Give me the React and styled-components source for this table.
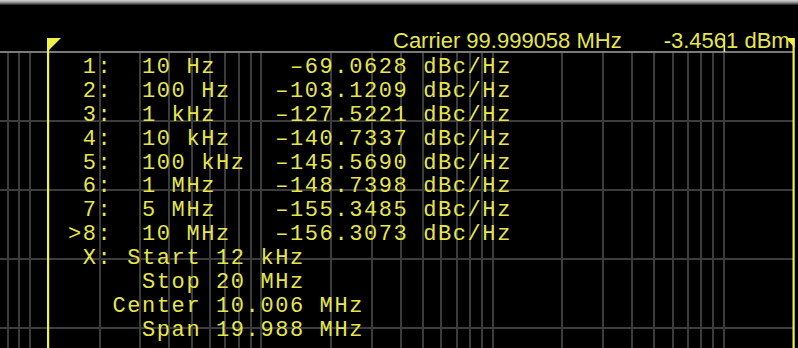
import React from 'react';
import styled, { createGlobalStyle } from 'styled-components';

const YELLOW = '#e6e64a';
const LINE_YELLOW = '#f0f048';
const GRID = '#3c3c3c';
const BORDER = '#7a7a7a';
const CW = 14.8;

const GlobalStyle = createGlobalStyle`
  html, body { margin: 0; padding: 0; background: #000; }
  #root { width: 798px; height: 348px; }
`;

const Screen = styled.div`
  width: 798px;
  height: 348px;
  background: #000;
  overflow: hidden;
  display: flex;
  flex-direction: column;
`;

const TopBezel = styled.div`
  flex: none;
  height: 5px;
  background: linear-gradient(#d2d2d2 0%, #a4a4a4 40%, #4c4c4c 80%, #151515 100%);
`;

const Display = styled.div`
  position: relative;
  flex: 1;
  min-height: 0;
`;

const Graticule = styled.svg`
  position: absolute;
  left: 0;
  top: 0;
  width: 100%;
  height: 100%;
  display: block;
`;

const Header = styled.div`
  position: relative;
  height: 47px;
  display: flex;
  align-items: flex-end;
  gap: 42px;
  padding-left: 393px;
  font-family: "Liberation Sans", Arial, sans-serif;
  font-size: 22px;
  line-height: 22px;
  color: ${YELLOW};
  white-space: pre;
`;

const Readout = styled.div`
  position: relative;
  margin-top: 4px;
  padding-left: 68px;
  font-family: "Liberation Mono", "DejaVu Sans Mono", monospace;
  font-size: 22px;
  letter-spacing: 1.6px;
  line-height: 23.9px;
  color: ${YELLOW};
  white-space: pre;
`;

const Row = styled.div`
  display: flex;
  height: 23.9px;
`;

const Field = styled.span`
  flex: none;
  width: ${(p) => p.$cells * CW}px;
  margin-left: ${(p) => (p.$skip || 0) * CW}px;
  text-align: ${(p) => p.$align || 'left'};
`;

const markers = [
  ['1:', '10 Hz', '–69.0628'],
  ['2:', '100 Hz', '–103.1209'],
  ['3:', '1 kHz', '–127.5221'],
  ['4:', '10 kHz', '–140.7337'],
  ['5:', '100 kHz', '–145.5690'],
  ['6:', '1 MHz', '–148.7398'],
  ['7:', '5 MHz', '–155.3485'],
  ['>8:', '10 MHz', '–156.3073'],
];

const xAxis = [
  ['X:', 'Start', '12 kHz'],
  ['', 'Stop', '20 MHz'],
  ['', 'Center', '10.006 MHz'],
  ['', 'Span', '19.988 MHz'],
];

const freqs = [];
[8e3, 9e3].forEach((f) => freqs.push(f));
[1e4, 1e5, 1e6].forEach((d) => {
  for (let m = 1; m <= 9; m++) freqs.push(d * m);
});
freqs.push(1e7);

const xOf = (f) => Math.round(30 + 231.3 * Math.log10(f / 1e4));
const hLines = [121, 190, 259, 328];

function Grid() {
  return (
    <Graticule viewBox="0 5 798 343" preserveAspectRatio="none">
      {freqs.map((f) => (
        <line key={f} x1={xOf(f)} x2={xOf(f)} y1={52} y2={348} stroke={GRID} strokeWidth={2} />
      ))}
      {hLines.map((y) => (
        <line key={y} x1={0} x2={793} y1={y} y2={y} stroke={GRID} strokeWidth={2} />
      ))}
      <line x1={0} x2={793} y1={52} y2={52} stroke={BORDER} strokeWidth={2} />
      {/* start flag */}
      <rect x={47} y={38} width={2.2} height={310} fill={LINE_YELLOW} />
      <polygon points="47,38 61,38 49,50" fill={LINE_YELLOW} />
      {/* stop flag */}
      <rect x={792.5} y={38} width={2.2} height={310} fill={LINE_YELLOW} />
      <polygon points="786,38 794.7,38 794.7,48" fill={LINE_YELLOW} />
      {/* marker tick */}
      <rect x={723.5} y={35} width={1.6} height={17} fill={LINE_YELLOW} />
    </Graticule>
  );
}

export default function App() {
  return (
    <>
      <GlobalStyle />
      <Screen>
        <TopBezel />
        <Display>
          <Grid />
          <Header>
            <span>Carrier 99.999058 MHz</span>
            <span>-3.4561 dBm</span>
          </Header>
          <Readout>
            {markers.map(([label, freq, value]) => (
              <Row key={label}>
                <Field $cells={3} $align="right">{label}</Field>
                <Field $cells={9} $skip={2}>{freq}</Field>
                <Field $cells={9} $align="right">{value}</Field>
                <Field $cells={6} $skip={1}>dBc/Hz</Field>
              </Row>
            ))}
            {xAxis.map(([label, name, value]) => (
              <Row key={name}>
                <Field $cells={3} $align="right">{label}</Field>
                <Field $cells={6} $align="right">{name}</Field>
                <Field $cells={10} $skip={1}>{value}</Field>
              </Row>
            ))}
          </Readout>
        </Display>
      </Screen>
    </>
  );
}
